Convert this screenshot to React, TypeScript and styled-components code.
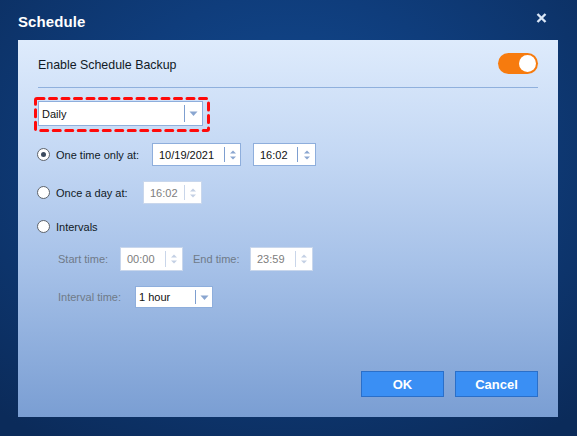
import styled, { createGlobalStyle } from 'styled-components';

const GlobalStyle = createGlobalStyle`
  html, body {
    margin: 0;
    padding: 0;
  }
  body {
    font-family: 'Liberation Sans', Arial, sans-serif;
    background: #0b2a57;
  }
`;

type SpinProps = {
  value: string;
  width: number;
  spin?: number;
  disabled?: boolean;
};

type SelectProps = {
  value: string;
  width: number;
  height: number;
  arrowArea: number;
};

type RadioProps = {
  label: string;
  checked?: boolean;
  labelWidth?: number;
};

const Spinner = ({ value, width, spin = 17, disabled = false }: SpinProps) => {
  return (
    <SpinBox $width={width} $disabled={disabled}>
      <SpinValue $disabled={disabled}>{value}</SpinValue>
      <SpinArrows $width={spin} $disabled={disabled}>
        <svg width="8" height="14" viewBox="0 0 8 14">
          <path d="M1 5.5 L4 2.5 L7 5.5 Z" fill="currentColor" />
          <path d="M1 8.5 L4 11.5 L7 8.5 Z" fill="currentColor" />
        </svg>
      </SpinArrows>
    </SpinBox>
  );
};

const Select = ({ value, width, height, arrowArea }: SelectProps) => {
  return (
    <SelectBox $width={width} $height={height}>
      <SelectValue>{value}</SelectValue>
      <SelectArrow $width={arrowArea}>
        <svg width="9" height="6" viewBox="0 0 9 6">
          <path d="M0.5 0.5 L8.5 0.5 L4.5 5 Z" fill="currentColor" />
        </svg>
      </SelectArrow>
    </SelectBox>
  );
};

const Radio = ({ label, checked = false, labelWidth }: RadioProps) => {
  return (
    <RadioWrap>
      <RadioCircle $checked={checked} />
      <RadioLabel $width={labelWidth}>{label}</RadioLabel>
    </RadioWrap>
  );
};

export default function App() {
  return (
    <>
      <GlobalStyle />
      <Window>
        <TitleBar>
          <Title>Schedule</Title>
          <CloseButton aria-label="close">
            <svg width="11" height="10" viewBox="0 0 11 10">
              <path d="M1.5 1 L9.5 9 M9.5 1 L1.5 9" stroke="#dbe7f7" strokeWidth="2.4" />
            </svg>
          </CloseButton>
        </TitleBar>
        <Panel>
          <ToggleRow>
            <EnableLabel>Enable Schedule Backup</EnableLabel>
            <Toggle>
              <Knob />
            </Toggle>
          </ToggleRow>
          <Separator />
          <Highlight>
            <svg width="176" height="35" viewBox="0 0 176 35">
              <rect
                x="1.5"
                y="1.5"
                width="173"
                height="32"
                rx="1.5"
                fill="none"
                stroke="#ff0a0a"
                strokeWidth="3"
                strokeLinecap="round"
                strokeDasharray="7 5.5"
              />
            </svg>
            <Select value="Daily" width={165} height={25} arrowArea={18} />
          </Highlight>

          <Row $top={11} $height={23}>
            <Radio label="One time only at:" checked labelWidth={102} />
            <Spinner value="10/19/2021" width={89} spin={16} />
            <Gap $w={12} />
            <Spinner value="16:02" width={63} spin={18} />
          </Row>
          <Row $top={15} $height={23}>
            <Radio label="Once a day at:" labelWidth={93} />
            <Spinner value="16:02" width={59} spin={17} disabled />
          </Row>
          <Row $top={11} $height={23}>
            <Radio label="Intervals" />
          </Row>
          <Row $top={9} $height={24} $indent={20}>
            <DimLabel $width={62}>Start time:</DimLabel>
            <Spinner value="00:00" width={63} spin={17} disabled />
            <DimLabel $width={67} $pad={10}>End time:</DimLabel>
            <Spinner value="23:59" width={63} spin={17} disabled />
          </Row>
          <Row $top={15} $height={22} $indent={20}>
            <DimLabel $width={77}>Interval time:</DimLabel>
            <Select value="1 hour" width={78} height={22} arrowArea={17} />
          </Row>

          <Footer>
            <Button>OK</Button>
            <Button>Cancel</Button>
          </Footer>
        </Panel>
      </Window>
    </>
  );
}

const Window = styled.div`
  width: 577px;
  height: 436px;
  box-sizing: border-box;
  display: flex;
  flex-direction: column;
  background: radial-gradient(ellipse 75% 80% at 50% 35%, #134c93 0%, #0f3d7c 45%, #0b2b5a 100%);
  overflow: hidden;
`;

const TitleBar = styled.div`
  height: 40px;
  display: flex;
  align-items: center;
  justify-content: space-between;
  padding: 2px 30px 0 18px;
  box-sizing: border-box;
`;

const Title = styled.div`
  color: #ffffff;
  font-size: 15px;
  font-weight: bold;
  letter-spacing: 0.1px;
`;

const CloseButton = styled.div`
  display: flex;
  margin-top: -7px;
`;

const Panel = styled.div`
  width: 540px;
  height: 377px;
  margin-left: 18px;
  box-sizing: border-box;
  padding: 13px 20px 20px 20px;
  display: flex;
  flex-direction: column;
  background: linear-gradient(180deg, #deebfc 0%, #c4d8f4 30%, #a6c1e8 60%, #7a9ed3 100%);
`;

const ToggleRow = styled.div`
  height: 21px;
  display: flex;
  align-items: center;
  justify-content: space-between;
`;

const EnableLabel = styled.div`
  font-size: 12.4px;
  color: #111a26;
  margin-top: 3px;
`;

const Toggle = styled.div`
  width: 40px;
  height: 21px;
  border-radius: 11px;
  background: #f77b0e;
  display: flex;
  align-items: center;
  justify-content: flex-end;
  padding-right: 2px;
  box-sizing: border-box;
`;

const Knob = styled.div`
  width: 17px;
  height: 17px;
  border-radius: 50%;
  background: #ffffff;
`;

const Separator = styled.div`
  height: 1px;
  margin-top: 13px;
  background: #8fb0dd;
`;

const Highlight = styled.div`
  position: relative;
  width: 176px;
  height: 35px;
  margin: 9px 0 0 -4px;
  padding: 4px;
  box-sizing: border-box;

  & > svg {
    position: absolute;
    left: 0;
    top: 0;
  }
`;

const SelectBox = styled.div<{ $width: number; $height: number }>`
  width: ${({ $width }) => `${$width}px`};
  height: ${({ $height }) => `${$height}px`};
  box-sizing: border-box;
  border: 1px solid #8eaedc;
  background: #ffffff;
  display: flex;
  align-items: center;
`;

const SelectValue = styled.div`
  flex: 1;
  padding-left: 3px;
  font-size: 11px;
  color: #111111;
`;

const SelectArrow = styled.div<{ $width: number }>`
  width: ${({ $width }) => `${$width}px`};
  height: calc(100% - 6px);
  border-left: 1px solid #7e9fd0;
  display: flex;
  align-items: center;
  justify-content: center;
  color: #8aa6d0;
  padding-top: 1px;
  box-sizing: border-box;
`;

const Row = styled.div<{ $top: number; $height: number; $indent?: number }>`
  height: ${({ $height }) => `${$height}px`};
  margin-top: ${({ $top }) => `${$top}px`};
  padding-left: ${({ $indent }) => `${$indent ?? 0}px`};
  display: flex;
  align-items: center;
`;

const Gap = styled.div<{ $w: number }>`
  width: ${({ $w }) => `${$w}px`};
`;

const RadioWrap = styled.div`
  display: flex;
  align-items: center;
  margin-left: -1px;
`;

const RadioCircle = styled.div<{ $checked: boolean }>`
  width: 13px;
  height: 13px;
  box-sizing: border-box;
  border-radius: 50%;
  border: 1px solid #5d636b;
  background: #ffffff;
  position: relative;

  &::after {
    content: '';
    display: ${({ $checked }) => ($checked ? 'block' : 'none')};
    position: absolute;
    left: 3px;
    top: 3px;
    width: 5px;
    height: 5px;
    border-radius: 50%;
    background: #3b4a5e;
  }
`;

const RadioLabel = styled.div<{ $width?: number }>`
  padding-left: 6px;
  width: ${({ $width }) => ($width ? `${$width}px` : 'auto')};
  box-sizing: border-box;
  font-size: 11px;
  color: #111a26;
`;

const DimLabel = styled.div<{ $width: number; $pad?: number }>`
  width: ${({ $width }) => `${$width}px`};
  padding-left: ${({ $pad }) => `${$pad ?? 0}px`};
  box-sizing: border-box;
  font-size: 11px;
  color: #6f7a88;
`;

const SpinBox = styled.div<{ $width: number; $disabled: boolean }>`
  width: ${({ $width }) => `${$width}px`};
  height: 100%;
  box-sizing: border-box;
  border: 1px solid ${({ $disabled }) => ($disabled ? '#c9d7ec' : '#8eaedc')};
  background: #ffffff;
  display: flex;
  align-items: center;
`;

const SpinValue = styled.div<{ $disabled: boolean }>`
  flex: 1;
  padding-left: 6px;
  font-size: 11px;
  color: ${({ $disabled }) => ($disabled ? '#7d7d7d' : '#111111')};
`;

const SpinArrows = styled.div<{ $width: number; $disabled: boolean }>`
  width: ${({ $width }) => `${$width}px`};
  height: calc(100% - 6px);
  box-sizing: border-box;
  border-left: 1px solid ${({ $disabled }) => ($disabled ? '#c9d6ea' : '#7e9fd0')};
  display: flex;
  align-items: center;
  justify-content: center;
  color: ${({ $disabled }) => ($disabled ? '#c3d0e4' : '#8aa6d0')};
`;

const Footer = styled.div`
  margin-top: auto;
  display: flex;
  justify-content: flex-end;
  gap: 11px;
`;

const Button = styled.button`
  width: 83px;
  height: 26px;
  box-sizing: border-box;
  border: 1px solid #2a6fc9;
  background: #3a8ff4;
  color: #ffffff;
  font-family: 'Liberation Sans', Arial, sans-serif;
  font-size: 13px;
  font-weight: bold;
  padding: 0;
  cursor: pointer;
`;
